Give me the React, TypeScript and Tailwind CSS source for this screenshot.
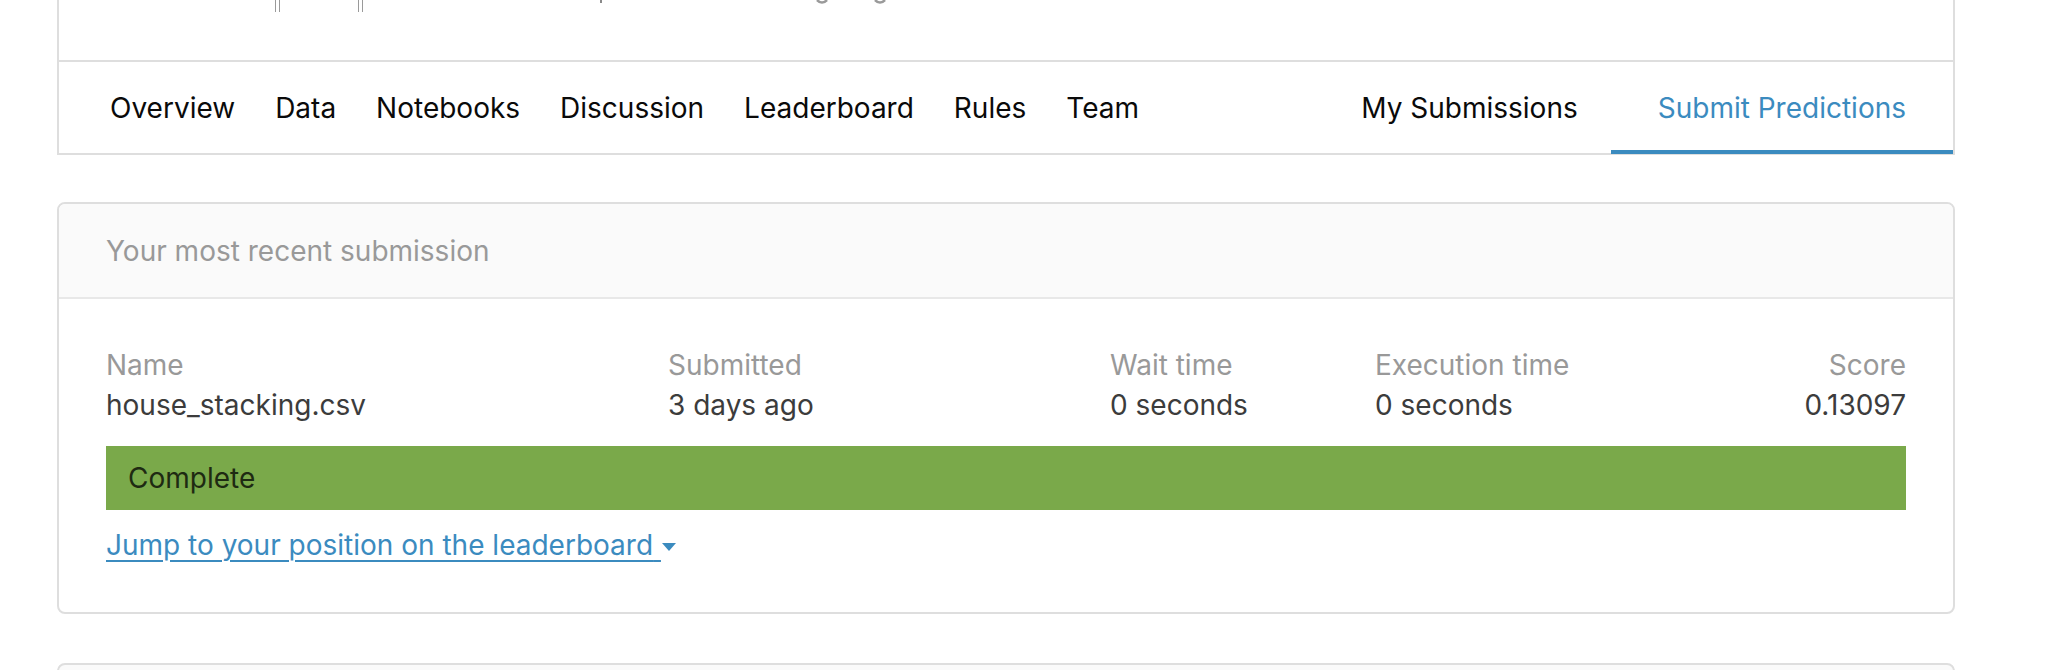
import { useState } from 'react';

const tabs = ['Overview', 'Data', 'Notebooks', 'Discussion', 'Leaderboard', 'Rules', 'Team'];

function Remnants() {
  // bits of the line above that got cut off by the screenshot
  return (
    <div className="relative h-[60px]">
      <div className="absolute left-[216px] top-0 flex gap-[3px]">
        <div className="w-[1px] h-[12px] bg-[#9a9a9a]" />
        <div className="w-[1px] h-[12px] bg-[#9a9a9a]" />
      </div>
      <div className="absolute left-[299px] top-0 flex gap-[3px]">
        <div className="w-[1px] h-[12px] bg-[#9a9a9a]" />
        <div className="w-[1px] h-[12px] bg-[#9a9a9a]" />
      </div>
      <div className="absolute left-[541px] top-0 w-[2px] h-[3px] bg-[#8a8a8a]" />
      <svg className="absolute left-[757px] top-0" width="12" height="6" viewBox="0 0 12 6">
        <path d="M1 0 Q6 5 11 0" stroke="#9a9a9a" strokeWidth="2.5" fill="none" />
      </svg>
      <svg className="absolute left-[815px] top-0" width="12" height="6" viewBox="0 0 12 6">
        <path d="M1 0 Q6 5 11 0" stroke="#9a9a9a" strokeWidth="2.5" fill="none" />
      </svg>
    </div>
  );
}

export default function App() {
  const [active] = useState('Submit Predictions');

  return (
    <div className="h-[670px] overflow-hidden bg-white font-['Inter','Noto_Sans',sans-serif] text-[28px]">
      <div className="ml-[57px] w-[1898px]">
        {/* Header card with tabs */}
        <div className="border-x-2 border-[#dedede]">
          <Remnants />
          <div className="flex items-stretch justify-between h-[95px] border-y-2 border-[#dedede]">
            <div className="flex items-center gap-[40px] pl-[51px]">
              {tabs.map(t => (
                <span key={t} className="text-[#0a0a0a]">{t}</span>
              ))}
            </div>
            <div className="flex items-stretch">
              <span className="flex items-center mr-[33px] text-[#0a0a0a]">My Submissions</span>
              <div className="relative flex items-center px-[47px] text-[#3b8bbf]">
                {active}
                <div className="absolute left-0 right-0 bottom-[-1px] h-[4px] bg-[#3b8bbf]" />
              </div>
            </div>
          </div>
        </div>

        {/* Most recent submission */}
        <div className="mt-[47px] border-2 border-[#dedede] rounded-[8px] overflow-hidden">
          <div className="h-[95px] flex items-center px-[47px] bg-[#fafafa] border-b-2 border-[#e8e8e8] text-[#999999]">
            Your most recent submission
          </div>
          <div className="px-[47px] pt-[46px] pb-[47px] leading-[40px]">
            <div className="flex">
              <div className="w-[562px]">
                <div className="text-[#999999]">Name</div>
                <div className="text-[#3c3c3c]">house_stacking.csv</div>
              </div>
              <div className="w-[442px]">
                <div className="text-[#999999]">Submitted</div>
                <div className="text-[#3c3c3c]">3 days ago</div>
              </div>
              <div className="w-[265px]">
                <div className="text-[#999999]">Wait time</div>
                <div className="text-[#3c3c3c]">0 seconds</div>
              </div>
              <div className="flex-1">
                <div className="text-[#999999]">Execution time</div>
                <div className="text-[#3c3c3c]">0 seconds</div>
              </div>
              <div className="text-right">
                <div className="text-[#999999]">Score</div>
                <div className="text-[#3c3c3c]">0.13097</div>
              </div>
            </div>
            <div className="mt-[21px] h-[64px] flex items-center px-[22px] bg-[#7aa94a] text-[#1e2a12]">
              Complete
            </div>
            <div className="mt-[15px]">
              <a href="#" className="text-[#3b8bbf] underline underline-offset-[5px] decoration-[2px]">
                Jump to your position on the leaderboard{' '}
              </a>
              <svg className="inline-block ml-[1px] align-middle" width="14" height="8" viewBox="0 0 14 8">
                <path d="M0 0 H14 L7 8 Z" fill="#3b8bbf" />
              </svg>
            </div>
          </div>
        </div>

        {/* next card, mostly cut off */}
        <div className="mt-[49px] h-[20px] border-2 border-[#dedede] rounded-t-[8px] bg-[#fafafa]" />
      </div>
    </div>
  );
}
